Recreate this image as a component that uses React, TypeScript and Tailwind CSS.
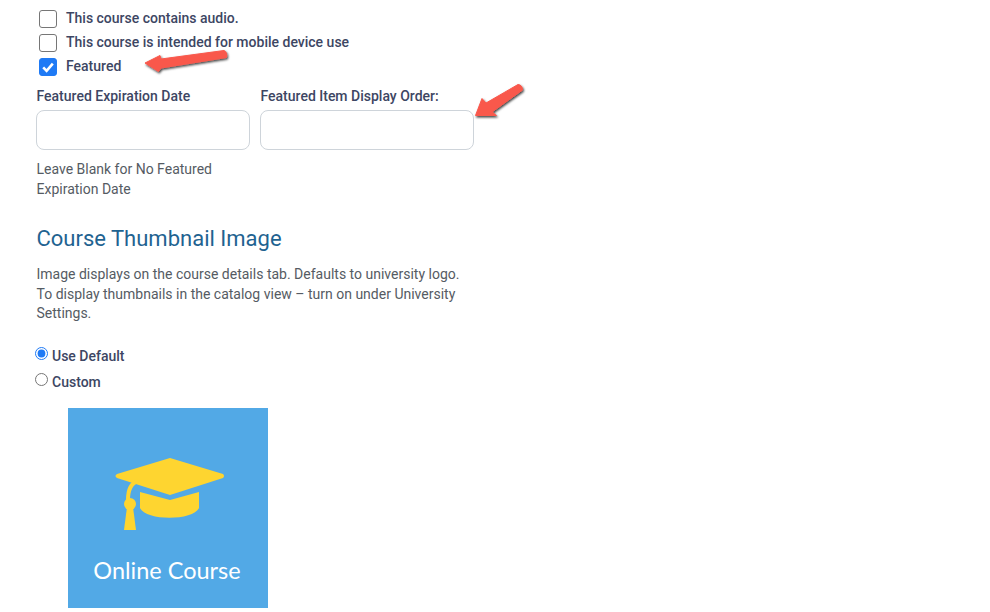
import { useState } from "react"

function CheckRow({ label, initial = false }: { label: string; initial?: boolean }) {
  const [checked, setChecked] = useState(initial)
  return (
    <label className="flex items-center h-6 pl-[3px] text-[14px] font-medium text-[#3d4663]">
      <span className="relative w-[18px] h-[18px] mr-[9px] translate-y-px">
        <input
          type="checkbox"
          checked={checked}
          onChange={e => setChecked(e.target.checked)}
          className="appearance-none block w-[18px] h-[18px] rounded-[3px] border border-[#767676] bg-white checked:bg-[#1f7af5] checked:border-[#1f7af5]"
        />
        {checked && (
          <svg viewBox="0 0 18 18" className="absolute inset-0 w-[18px] h-[18px] pointer-events-none">
            <path d="M4.2 9.4 L7.6 12.8 L13.8 5.6" fill="none" stroke="#fff" strokeWidth="2.6" />
          </svg>
        )}
      </span>
      {label}
    </label>
  )
}

function Field({ label }: { label: string }) {
  return (
    <div className="w-[214px]">
      <label className="block h-[24px] pl-[0.5px] text-[14px] leading-[20px] font-medium text-[#3d4663]">{label}</label>
      <input type="text" className="block w-full h-[40px] rounded-[8px] border border-[#ced4da] bg-white" />
    </div>
  )
}

function RadioRow({ label, defaultChecked }: { label: string; defaultChecked?: boolean }) {
  return (
    <label className="flex items-center h-[26px] text-[14px] font-medium text-[#3d4663]">
      <input
        type="radio"
        name="thumbnail"
        defaultChecked={defaultChecked}
        className="w-[13px] h-[13px] m-0 mr-[4px] -ml-px -translate-y-[3px] accent-[#1f7af5]"
      />
      {label}
    </label>
  )
}

function Thumbnail() {
  return (
    <div className="w-[200px] h-[200px] ml-[32px] mt-[12px] bg-[#52a9e6] flex flex-col items-center overflow-hidden">
      <svg viewBox="0 0 200 130" className="w-[200px] h-[130px] shrink-0">
        <path d="M72 84 L102 92 L131 84 L131 100 C125 113 78 113 72 100 Z" fill="#fed530" />
        <path d="M102 50 L155 66 Q157 68 155 70 L102 87 L49 70 Q46 68 49 66 Z" fill="#fed530" />
        <path d="M70 73 Q60 76 60 92" fill="none" stroke="#fed530" strokeWidth="4" />
        <circle cx="62" cy="96" r="6" fill="#fed530" />
        <path d="M59 99 L65 99 L68 122 L56 122 Z" fill="#fed530" />
      </svg>
      <div className="mt-[16px] pr-[2px] text-[23.5px] leading-[32px] text-white font-['Lato',sans-serif]">Online Course</div>
    </div>
  )
}

export default function App() {
  return (
    <div className="relative w-[990px] h-[612px] overflow-hidden bg-white pl-[36px] pt-[6px] font-['Roboto',sans-serif]">
      {/* Options */}
      <CheckRow label="This course contains audio." />
      <CheckRow label="This course is intended for mobile device use" />
      <CheckRow label="Featured" initial />

      {/* Featured fields */}
      <div className="flex gap-[10px] mt-[8px]">
        <Field label="Featured Expiration Date" />
        <Field label="Featured Item Display Order:" />
      </div>
      <p className="w-[200px] mt-[9px] pl-[0.5px] text-[14px] leading-[20px] text-[#555b63]">
        Leave Blank for No Featured Expiration Date
      </p>

      {/* Thumbnail */}
      <h2 className="mt-[25px] pl-[0.5px] text-[22px] leading-[30px] text-[#1f6391]">Course Thumbnail Image</h2>
      <p className="w-[430px] mt-[11px] pl-[0.5px] text-[14px] leading-[19.5px] text-[#555b63]">
        Image displays on the course details tab. Defaults to university logo. To display thumbnails in the catalog view – turn on under University Settings.
      </p>
      <div className="mt-[20px]">
        <RadioRow label="Use Default" defaultChecked />
        <RadioRow label="Custom" />
      </div>
      <Thumbnail />

      {/* Annotation arrows */}
      <svg className="absolute inset-0 w-[990px] h-[612px] pointer-events-none" viewBox="0 0 990 612">
        <defs>
          <filter id="arrowShadow" x="-20%" y="-20%" width="140%" height="150%">
            <feDropShadow dx="1" dy="1.5" stdDeviation="1" floodColor="#000" floodOpacity="0.75" />
          </filter>
        </defs>
        <g fill="#f9584c" stroke="#f9584c" strokeWidth="1" strokeLinejoin="round" filter="url(#arrowShadow)">
          <path d="M145 63 L160 55.500 L161 59 L224 50.500 Q227.500 52 226.500 57.500 L161 68 L158.500 71.500 Z" />
          <path d="M475.500 115.500 L482 98.500 L486 103 L518 84.500 Q522.500 85 522.500 90 L492 112 L496.500 115.500 Z" />
        </g>
      </svg>
    </div>
  )
}
